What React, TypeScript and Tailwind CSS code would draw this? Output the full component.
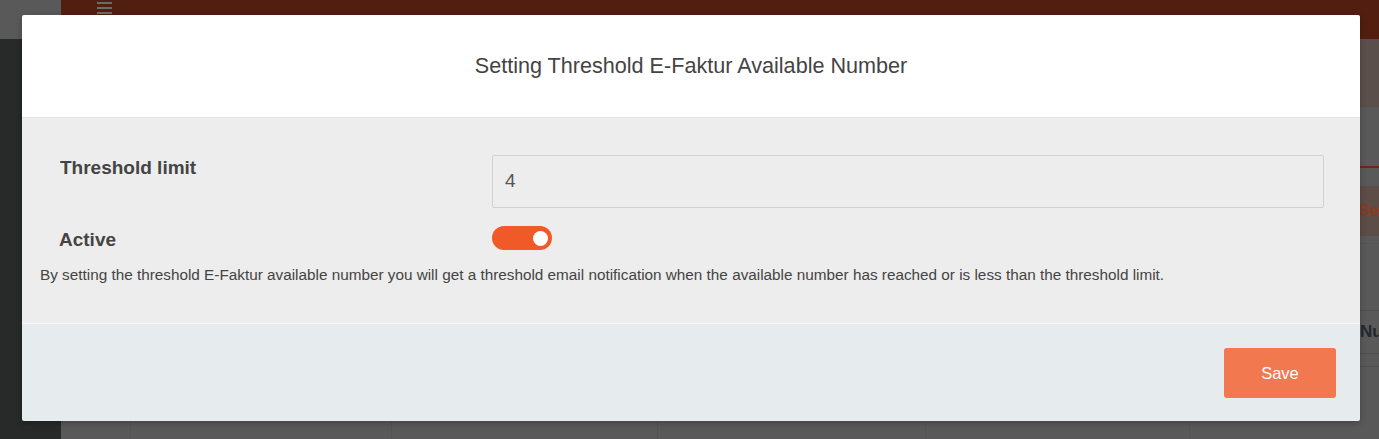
export default function App() {
  return (
    <div className="relative h-[439px] w-[1379px] overflow-hidden bg-[#595959] font-['Liberation_Sans',Arial,sans-serif]">
      {/* page behind the dimmed overlay */}
      <div className="flex h-full">
        <div className="flex w-[61px] shrink-0 flex-col">
          <div className="h-[39px] bg-[#595959]" />
          <div className="flex-1 bg-[#272a29]" />
        </div>
        <div className="flex min-w-0 flex-1 flex-col">
          <div className="flex h-[39px] items-start bg-[#521e10] pl-[36px] pt-[2px]">
            <div className="flex w-[15px] flex-col gap-[3px]">
              <span className="h-[2px] bg-[#6b6b6b]" />
              <span className="h-[2px] bg-[#6b6b6b]" />
              <span className="h-[2px] bg-[#6b6b6b]" />
            </div>
          </div>
          <div className="h-[68px] bg-[#5a4f4b]" />
          <div className="h-[61px] border-b-2 border-[#6b2a15]" />
          <div className="flex pl-[1289px] pt-[18px]">
            <div className="flex h-[50px] items-center whitespace-nowrap bg-[#5d4d47] pl-[9px] text-[17px] font-bold text-[#8a3a1e]">
              Setting
            </div>
          </div>
          <div className="mt-[7px] h-[67px] border-t border-[#555]" />
          <div className="flex h-[44px] items-center whitespace-nowrap border-y border-[#505050] pl-[1299px] text-[17px] font-bold text-[#1f2933]">
            Number
          </div>
          <div className="h-[13px] border-b border-[#505050]" />
          <div className="flex flex-1 pl-[69px]">
            <div className="w-[262px] border-x border-[#545454]" />
            <div className="w-[266px] border-r border-[#545454]" />
            <div className="w-[268px] border-r border-[#545454]" />
            <div className="w-[264px] border-r border-[#545454]" />
          </div>
        </div>
      </div>

      {/* modal */}
      <div className="absolute left-[22px] top-[15px] flex w-[1338px] flex-col overflow-hidden rounded-[2px] shadow-[0_2px_6px_rgba(0,0,0,0.25)]">
        <div className="flex h-[103px] items-center justify-center border-b border-[#e6e6e6] bg-white">
          <h2 className="text-[21.6px] text-[#444]">Setting Threshold E-Faktur Available Number</h2>
        </div>

        <div className="h-[205px] bg-[#ededed] pl-[18px] pt-[37px]">
          <div className="flex">
            <label className="mt-[3px] w-[452px] shrink-0 pl-[20px] text-[19px] font-bold leading-[20px] text-[#444]">
              Threshold limit
            </label>
            <div className="mr-[36px] flex h-[53px] flex-1 items-center rounded-[2px] border border-[#ccd3d3] pl-[12px] text-[19px] text-[#555]">
              4
            </div>
          </div>
          <div className="mt-[18px] flex">
            <label className="mt-[4px] w-[452px] shrink-0 pl-[19px] text-[19px] font-bold leading-[20px] text-[#444]">
              Active
            </label>
            <div className="flex h-[24px] w-[60px] items-center justify-end rounded-full bg-[#f05a28] pr-[4px]">
              <span className="h-[15px] w-[15px] rounded-full bg-white" />
            </div>
          </div>
          <p className="mt-[15px] whitespace-nowrap text-[15.3px] leading-[20px] text-[#444]">
            By setting the threshold E-Faktur available number you will get a threshold email notification when the available number has reached or is less than the threshold limit.
          </p>
        </div>

        <div className="flex h-[98px] items-start justify-end border-t border-[#f3f5f6] bg-[#e6ebee] pr-[24px] pt-[24px]">
          <button className="h-[50px] w-[112px] rounded-[3px] bg-[#f27850] text-[16.5px] text-white">
            Save
          </button>
        </div>
      </div>
    </div>
  );
}
